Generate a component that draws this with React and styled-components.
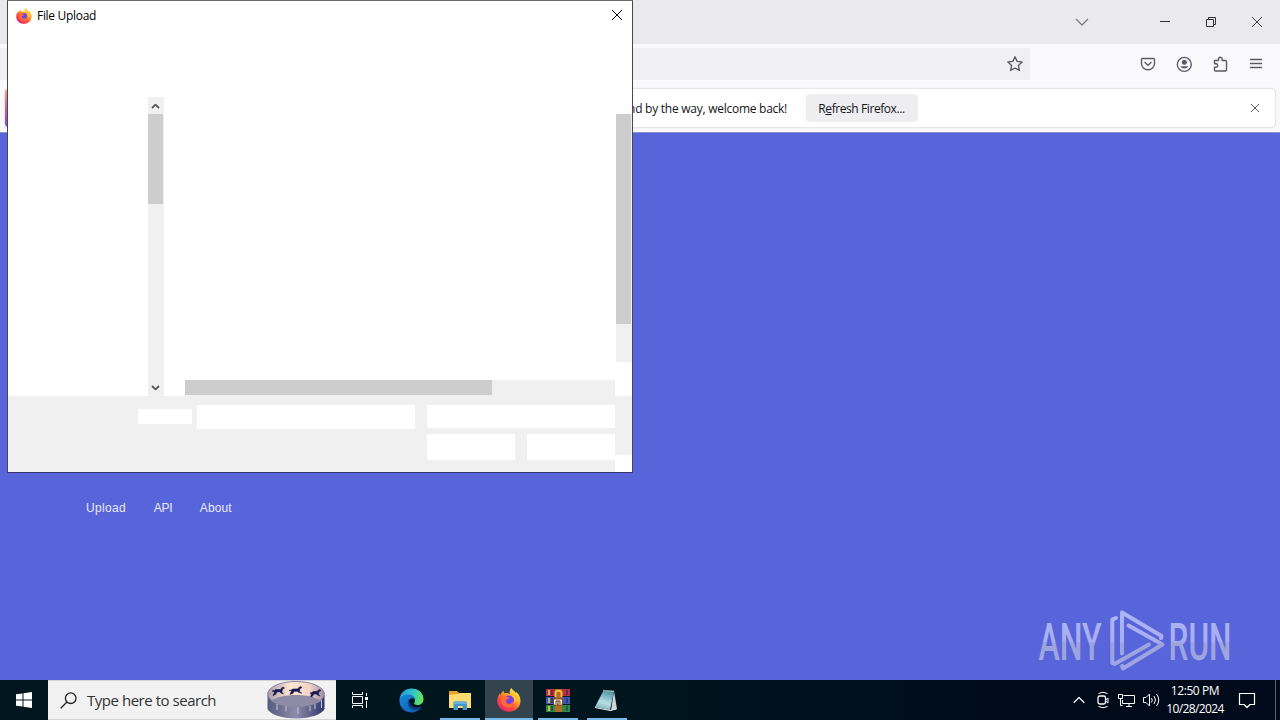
import React from "react";
import styled, { createGlobalStyle } from "styled-components";

const GlobalStyle = createGlobalStyle`
  * {
    box-sizing: border-box;
  }
  body {
    margin: 0;
    overflow: hidden;
  }
`;

const Screen = styled.div`
  position: relative;
  display: flex;
  flex-direction: column;
  width: 1280px;
  height: 720px;
  overflow: hidden;
  background: #f9f9fb;
  font-family: "Open Sans", "Noto Sans", sans-serif;
  svg {
    display: block;
    flex: none;
    overflow: visible;
  }
`;

const Label = styled.span`
  font-family: ${(p) => p.$font || '"Open Sans", sans-serif'};
  font-size: ${(p) => p.$size || 12}px;
  letter-spacing: ${(p) => p.$spacing || 0}px;
  color: ${(p) => p.$color || "#15141a"};
  line-height: 18px;
  white-space: pre;
  u {
    text-underline-offset: 1px;
  }
`;

/* browser window */

const TabStrip = styled.div`
  display: flex;
  justify-content: flex-end;
  align-items: center;
  height: 44px;
  padding-right: 17px;
  background: #eaeaee;
`;

const WindowButtons = styled.div`
  display: flex;
  gap: 34px;
  margin-left: 70px;
`;

const NavBar = styled.div`
  display: flex;
  align-items: center;
  justify-content: space-between;
  height: 40px;
  padding: 0 16px 0 0;
  background: #f9f9fb;
`;

const UrlBar = styled.div`
  display: flex;
  align-items: center;
  justify-content: flex-end;
  width: 1030px;
  height: 32px;
  padding-right: 7px;
  background: #f0f0f4;
`;

const NavIcons = styled.div`
  display: flex;
  gap: 20px;
`;

const NoticeRow = styled.div`
  height: 48px;
  padding: 5px 5px 0 5px;
  background: #f9f9fb;
`;

const Notice = styled.div`
  display: flex;
  align-items: center;
  height: 38px;
  border-radius: 4px;
  background: linear-gradient(#f5a878, #c9609b 50%, #8a4fc4) left / 4px 100% no-repeat #fff;
  box-shadow: 0 0 2px rgba(58, 57, 68, 0.35);
  padding-right: 12px;
`;

const NoticeText = styled.div`
  display: flex;
  justify-content: flex-end;
  width: 782px;
  padding-top: 2px;
`;

const RefreshButton = styled.button`
  width: 112px;
  height: 28px;
  margin: 0 auto 0 19px;
  padding: 2px 1px 0 0;
  border: 0;
  border-radius: 4px;
  background: #eeeef0;
`;

const Page = styled.main`
  display: flex;
  justify-content: space-between;
  height: 548px;
  border-top: 1px solid #8c93d0;
  background: #5865da;
`;

const PageLinks = styled.nav`
  display: flex;
  align-items: flex-start;
  gap: 27.6px;
  padding: 366px 0 0 86px;
`;

const Watermark = styled.div`
  align-self: flex-end;
  padding: 0 42px 7px 0;
`;

/* upload dialog, floats over the browser */

const Dialog = styled.section`
  position: absolute;
  left: 7px;
  top: 0;
  display: flex;
  flex-direction: column;
  width: 626px;
  height: 473px;
  border: 1px solid #47474f;
  border-top-color: #6a6a6e;
  border-bottom-color: #33366e;
  background: #fff;
`;

const DialogTitle = styled.header`
  display: flex;
  align-items: center;
  height: 30px;
  padding: 0 9px 0 8px;
  gap: 5px;
  svg:last-child {
    margin: -2px 0 0 auto;
  }
`;

const DialogBody = styled.div`
  display: flex;
  height: 365px;
`;

const TreeScroll = styled.div`
  display: flex;
  flex-direction: column;
  width: 16px;
  margin: 66px 0 0 140px;
  background: #f0f0f0;
`;

const ScrollArrow = styled.div`
  display: flex;
  align-items: center;
  justify-content: center;
  height: 17px;
  width: 15px;
  margin-top: ${(p) => (p.$down ? "auto" : 0)};
`;

const Thumb = styled.div`
  width: ${(p) => p.$w}px;
  height: ${(p) => p.$h}px;
  background: #cdcdcd;
`;

const Files = styled.div`
  display: flex;
  align-items: flex-end;
  flex: 1;
  padding: 0 1px 0 21px;
`;

const BottomScroll = styled.div`
  width: 430px;
  height: 16px;
  background: #f0f0f0;
`;

const SideScroll = styled.div`
  width: 16px;
  height: 248px;
  margin-top: 83px;
  background: #f0f0f0;
`;

const DialogFooter = styled.footer`
  display: flex;
  height: 76px;
`;

const Fields = styled.div`
  display: flex;
  align-items: flex-start;
  width: 607px;
  padding: 9px 0 0 130px;
  background: #f0f0f0;
`;

const Blank = styled.div`
  width: ${(p) => p.$w}px;
  height: ${(p) => p.$h}px;
  background: #fff;
`;

const FieldName = styled(Blank)`
  margin: 4px 5px 0 0;
`;

const FooterActions = styled.div`
  display: flex;
  flex-wrap: wrap;
  gap: 6px 12px;
  width: 188px;
  margin-left: 12px;
`;

const FooterEdge = styled.div`
  width: 17px;
  height: 59px;
  background: #f0f0f0;
`;

/* taskbar */

const Taskbar = styled.div`
  display: flex;
  height: 40px;
  background: linear-gradient(90deg, #00171f 0, #00151e 50%, #000b1a 80%, #000a1a);
`;

const StartButton = styled.div`
  display: flex;
  align-items: center;
  justify-content: center;
  width: 48px;
`;

const SearchBox = styled.div`
  display: flex;
  align-items: center;
  width: 288px;
  padding: 0 11px 0 12px;
  border: 1px solid #d4d4d4;
  border-width: 1px 0;
  background: #f2f2f2;
  span {
    margin-left: 10px;
  }
  svg:last-child {
    margin-left: auto;
  }
`;

const TaskView = styled.div`
  display: flex;
  align-items: center;
  justify-content: center;
  width: 51px;
  padding-right: 3px;
`;

const AppButton = styled.div`
  display: flex;
  align-items: center;
  justify-content: center;
  width: 48px;
  margin-right: 1px;
  background: ${(p) =>
    p.$running
      ? `linear-gradient(#76b9ed, #76b9ed) center bottom / ${p.$active ? 48 : 40}px 2px no-repeat`
      : "none"};
  background-color: ${(p) => (p.$active ? "#34444f" : "transparent")};
`;

const Tray = styled.div`
  display: flex;
  align-items: center;
  gap: 7px;
  margin-left: auto;
`;

const Clock = styled.div`
  display: flex;
  flex-direction: column;
  align-items: center;
  width: 60px;
  margin-right: 6px;
  margin-left: -2px;
`;

const ShowDesktop = styled.div`
  width: 5px;
  height: 40px;
  margin-left: 12px;
  border-left: 1px solid #59606b;
`;

const Line = ({ w, h, d, color = "#5b5b66", stroke = 1, children }) => (
  <svg
    width={w}
    height={h}
    viewBox={`0 0 ${w} ${h}`}
    fill="none"
    stroke={color}
    strokeWidth={stroke}
    strokeLinejoin="round"
  >
    {d && <path d={d} />}
    {children}
  </svg>
);

const Firefox = ({ size, id }) => (
  <svg width={size} height={size} viewBox="0 0 24 24">
    <defs>
      <linearGradient id={id} x1="0.85" y1="0.05" x2="0.2" y2="0.95">
        <stop offset="0" stopColor="#fff04a" />
        <stop offset="0.35" stopColor="#ffb02a" />
        <stop offset="0.65" stopColor="#ff5338" />
        <stop offset="1" stopColor="#e72470" />
      </linearGradient>
    </defs>
    <path
      fill={`url(#${id})`}
      d="M14.500 0c1 2.200 3.500 3.200 4.500 5.200.4-.4.3-1 .3-1.400 2.700 2.500 4.200 5.600 4.200 9C23.500 19.200 18.500 23.700 12 23.700 5.500 23.700.3 19.200.3 13c0-3.200 1-5.600 2.700-7.700l.3 1.900C4.200 5 5.300 3.500 6.700 2.700c-.2 1 .1 2 .8 2.500 2-.5 3.800 0 5.300 1C12.300 4 12.800 1.500 14.500 0z"
    />
    <circle cx="12" cy="12.600" r="5" fill="#7541df" />
    <path d="M4.500 9.500c2-1.700 5-1.500 8 .5-1 1.300-3 1.400-3.700 2-.5 2.300 1.200 4 3.300 4 2.300 0 3.600-1.400 3.900-3 .9 4-1.500 6.600-5 6.600-4.500 0-7.300-4.300-6.500-10.100z" fill="#ff6a36" />
    <path d="M13.500 5.500c3.300 2.500 4.800 5.500 3.600 10 2.700-2 2.900-6 1.400-8.500" fill="#ffbd2e" />
  </svg>
);

const Pool = () => (
  <svg width="58" height="38" viewBox="0 0 58 38">
    <defs>
      <linearGradient id="poolSide">
        <stop offset="0" stopColor="#555a80" />
        <stop offset="0.5" stopColor="#8f8ca9" />
        <stop offset="1" stopColor="#30366d" />
      </linearGradient>
      <linearGradient id="poolWall">
        <stop offset="0" stopColor="#a99bab" />
        <stop offset="0.4" stopColor="#ffe7d2" />
        <stop offset="0.75" stopColor="#f0d3c6" />
        <stop offset="1" stopColor="#9c8ca6" />
      </linearGradient>
    </defs>
    <path d="M.5 14v14c2 5 14 9.500 28.500 9.500S55.500 33 57.500 28V14z" fill="url(#poolSide)" />
    <ellipse cx="29" cy="13" rx="28.300" ry="12.500" fill="url(#poolWall)" stroke="#85859f" />
    <path d="M4 20c5-4 15-6 25-6s20 2 25 6c-6 4-15 5.500-25 5.500S10 24 4 20z" fill="#8d8ba6" />
    <path d="M10 23v6M19 25v5M31 26v7M43 25v5M48 23v5M54.500 19v8" stroke="#c9c7dc" fill="none" />
    <g fill="#17174e" stroke="#17174e" strokeWidth=".6">
      <path d="M5 10l2.500-.5 1-1h5L15.500 6l2 1-2 1-.7 3 1.700 2-2.500-1-1.200-1.200H10L8.500 13.500 6 14.500l1.700-3.500z" />
      <path d="M22 9.500l2.500-.5 1-1h5L33 5.500l2 1-2 1-.7 3 2.500 1.500-3-.5-1.500-1.200h-3l-1.800 2.500-2.500.5 1.700-3.500z" />
      <path d="M43 12l2-.5 1-1h4L52 8.500l2 1-2 1-.7 2.500 1.700 2-2.500-1-1.200-1H47l-1.800 2.500-1.700.3 1-3z" />
    </g>
  </svg>
);

const Edge = () => (
  <svg width="25" height="25" viewBox="0 0 25 25">
    <defs>
      <linearGradient id="edgeTop" x1="0" y1="0.3" x2="1" y2="0.5">
        <stop offset="0" stopColor="#249fe0" />
        <stop offset="0.55" stopColor="#32c5c8" />
        <stop offset="1" stopColor="#6be353" />
      </linearGradient>
      <linearGradient id="edgeLow" x1="0" y1="0" x2="1" y2="1">
        <stop offset="0" stopColor="#1688dc" />
        <stop offset="1" stopColor="#1158a8" />
      </linearGradient>
    </defs>
    <path d="M.5 12C1 5 6 .5 12.500.5 19.500.5 24.500 5 24.500 11c0 4-3 6-6 6s-4-1-3-2.500C17 11 14.500 7.500 10 7.500 5 7.500 1 10 .5 12z" fill="url(#edgeTop)" />
    <path d="M.5 12C1.200 8.500 5 6.500 9 6.500c4.500 0 7.500 2.500 7.300 5.500-1-2-4-2.500-5.800-.5C7 15.500 11 21 17 20.500c2.500-.2 4.500-1.400 5.500-2C20.500 22 17 24.500 12.500 24.500 5.500 24.500 0 19 .5 12z" fill="url(#edgeLow)" />
    <path d="M9.500 12c-2.500 5 1.500 10.500 7.500 10 2.500-.3 4.500-1.800 5.500-3.500-5 2.500-10 .5-11.500-3-.5-1.200-.8-2.500-.2-4z" fill="#123f86" />
  </svg>
);

const Explorer = () => (
  <svg width="22" height="20" viewBox="0 0 22 20">
    <path d="M0 1h8l2 2h11v4H0z" fill="#e8a624" />
    <path d="M0 5l9-1 2-1h11v15H0z" fill="#ffdc70" />
    <path d="M4.500 20v-7L6 11.500h10.500L18 13v7h-4.500v-4h-4.500v4z" fill="#4397ce" />
    <path d="M4.500 11.500H18v2.500H4.500z" fill="#64b3e3" />
  </svg>
);

const WinRar = () => (
  <svg width="24" height="23" viewBox="0 0 24 23">
    <rect y="0" width="24" height="7" fill="#b8324a" />
    <rect y="8" width="24" height="7" fill="#3f57b5" />
    <rect y="16" width="24" height="7" fill="#2c8a45" />
    <path d="M3 1v5M3 9v5M3 17v5" stroke="#e9cf5a" strokeWidth="1.500" />
    <path d="M6 1v5M21 1v5M6 9v5M21 9v5M6 17v5M21 17v5" stroke="#17203d" strokeOpacity=".45" strokeWidth="2" />
    <rect x="9" width="7" height="23" fill="#b56a2a" />
    <path d="M9.500 8V3.500C10 1 15 1 15.500 3.500V8" fill="none" stroke="#f2c230" strokeWidth="2" />
    <rect x="7.500" y="10" width="9" height="6" fill="#fff3d0" stroke="#7d4515" />
    <path d="M10 15v-3h4v3M12 12v4" stroke="#5d3524" fill="none" />
  </svg>
);

const Notepad = () => (
  <svg width="25" height="23" viewBox="0 0 25 23">
    <defs>
      <linearGradient id="pad" x1="0.600" y1="0" x2="0.300" y2="1">
        <stop offset="0" stopColor="#4f959e" />
        <stop offset="0.6" stopColor="#b8e0e4" />
        <stop offset="1" stopColor="#78a9b2" />
      </linearGradient>
    </defs>
    <path d="M19 2l3 18-6 1.500z" fill="#cfd3d4" />
    <path d="M8.500 1.500L19 2l-4 19-15-3z" fill="url(#pad)" />
    <path d="M8.500 1.500l10.500.8" stroke="#dfeeee" strokeWidth="1.500" strokeDasharray="1 1" />
    <path d="M0 18.500l15 3 6.500-1.500" stroke="#e9f0f0" fill="none" />
  </svg>
);

const AnyRun = () => (
  <svg width="200" height="64" viewBox="1038 609 200 64">
    <defs>
      <linearGradient id="mark" x1="0" y1="610" x2="0" y2="671" gradientUnits="userSpaceOnUse">
        <stop offset="0" stopColor="#aeb5f3" />
        <stop offset="0.52" stopColor="#a8aef0" />
        <stop offset="0.54" stopColor="#9da3dc" />
        <stop offset="1" stopColor="#a0a6e4" />
      </linearGradient>
    </defs>
    <g fill="url(#mark)" fontFamily="Roboto, sans-serif" fontSize="52" fontWeight="500">
      <text x="1038.500" y="659.500" textLength="63" lengthAdjust="spacingAndGlyphs">ANY</text>
      <text x="1168.500" y="659.500" textLength="63" lengthAdjust="spacingAndGlyphs">RUN</text>
    </g>
    <g fill="none" stroke="url(#mark)" strokeWidth="4" strokeLinejoin="round" strokeLinecap="round">
      <path d="M1116 618l-3.700 1.500v43.500l2.200 1L1149 644.500" />
      <path d="M1122 653.500v-41L1161.500 636l-.5 2" />
      <path d="M1128.500 625.500L1162.500 644.500 1123 668.500l-.8-2.500" />
    </g>
  </svg>
);

const App = () => (
  <Screen>
    <GlobalStyle />
    <TabStrip>
      <Line w={14} h={8} d="M1 1l6 6 6-6" color="#77777d" stroke={1.2} />
      <WindowButtons>
        <Line w={12} h={12} d="M1 5.500h10" color="#333" />
        <Line w={12} h={12} d="M1.500 3.500h7v7h-7zM3.500 3.500v-2h7v7h-2" color="#333" />
        <Line w={12} h={12} d="M1 1l10 10M11 1L1 11" color="#444" />
      </WindowButtons>
    </TabStrip>
    <NavBar>
      <UrlBar>
        <Line w={16} h={16} stroke={1.4} d="M8 .8l2.100 4.600 5 .6-3.700 3.400 1 5L8 12l-4.400 2.400 1-5L.9 6l5-.6z" />
      </UrlBar>
      <NavIcons>
        <Line w={16} h={16} stroke={1.4} d="M2.500 2.500h11q1 0 1 1V7.500a6.500 6.200 0 0 1-13 0v-4q0-1 1-1zM4.500 6L8 9.200 11.500 6" />
        <Line w={16} h={16} stroke={1.4}>
          <circle cx="8.300" cy="8.400" r="7" />
          <circle cx="8.300" cy="6.300" r="2.500" fill="#5b5b66" stroke="none" />
          <path d="M4.100 10.300h8.400a5 5 0 0 1-8.400 0z" fill="#5b5b66" stroke="none" />
        </Line>
        <Line w={16} h={16} stroke={1.4} d="M2.500 4.500h4V3a1.800 1.800 0 0 1 3.600 0v1.500h3.400q1 0 1 1V14q0 1-1 1h-10q-1 0-1-1v-2.800h1.500a1.700 1.700 0 0 0 0-3.400H2.500z" />
        <Line w={16} h={16} stroke={1.3} d="M2 3.500h12M2 7.500h12M2 11.500h12" />
      </NavIcons>
    </NavBar>
    <NoticeRow>
      <Notice>
        <NoticeText>
          <Label $spacing={-0.26}>And by the way, welcome back!</Label>
        </NoticeText>
        <RefreshButton>
          <Label $spacing={-0.42}>
            R<u>e</u>fresh Firefox...
          </Label>
        </RefreshButton>
        <Line w={16} h={16} d="M4 4l8 8M12 4l-8 8" />
      </Notice>
    </NoticeRow>
    <Page>
      <PageLinks>
        <Label $font='"Liberation Sans", sans-serif' $color="#e6e8fb" $spacing={0.35}>Upload</Label>
        <Label $font='"Liberation Sans", sans-serif' $color="#e6e8fb" $spacing={-0.3}>API</Label>
        <Label $font='"Liberation Sans", sans-serif' $color="#e6e8fb" $spacing={0.1}>About</Label>
      </PageLinks>
      <Watermark>
        <AnyRun />
      </Watermark>
    </Page>

    <Taskbar>
      <StartButton>
        <svg width="16" height="16" viewBox="0 0 16 16" fill="#fff">
          <path d="M0 2.300l6.500-.9v6.100H0zM7.500 1.200L16 0v7.500H7.500zM0 8.500h6.500v6.100L0 13.700zM7.500 8.500H16V16l-8.500-1.200z" />
        </svg>
      </StartButton>
      <SearchBox>
        <Line w={17} h={17} color="#222" stroke={1.3} d="M7 10L.7 16.300">
          <circle cx="10.700" cy="6.200" r="5.300" />
        </Line>
        <Label $size={15} $spacing={-0.47} $color="#333">Type here to search</Label>
        <Pool />
      </SearchBox>
      <TaskView>
        <Line w={16} h={16} color="#fff" d="M.5 0v2.500h10V0M.5 4.500h10v7H.500zM.5 16v-2.500h10V16M14.500 1v3M14.500 9v7">
          <path d="M13 5h3v3h-3z" fill="#fff" stroke="none" />
        </Line>
      </TaskView>
      <AppButton>
        <Edge />
      </AppButton>
      <AppButton $running>
        <Explorer />
      </AppButton>
      <AppButton $running $active>
        <Firefox size={24} id="ffTask" />
      </AppButton>
      <AppButton $running>
        <WinRar />
      </AppButton>
      <AppButton $running>
        <Notepad />
      </AppButton>
      <Tray>
        <Line w={13} h={8} color="#fff" stroke={1.2} d="M.7 6.700L6 1.500l5.300 5.200" />
        <Line w={18} h={18} color="#fff" d="M5.500 2.500q4.500-2.500 9 0M5.500 15.500q4.500 2.500 9 0">
          <rect x="5" y="5" width="7.500" height="8" rx="1.800" stroke="#fff" strokeWidth="1.300" />
          <path d="M12.500 9l2.500-2v5l-2.500-2" />
        </Line>
        <Line w={17} h={16} color="#fff" d="M5.500 3.500h11v8h-12V8M8 14.500h6M11 11.500v3M.500 2.500h4v4h-4zM2.500 6.500v7h2" />
        <Line w={18} h={16} color="#fff" d="M1.500 5.500h2.500L7.500 2v12L4 10.500H1.500zM9.500 6q1.500 2 0 4.500M12 4q3 4 0 8M14.500 2q4.500 6 0 12" />
        <Clock>
          <Label $color="#fff" $spacing={-0.4}>12:50 PM</Label>
          <Label $color="#fff" $spacing={-0.6}>10/28/2024</Label>
        </Clock>
        <Line w={18} h={18} color="#fff" stroke={1.2} d="M1.500 2.500h15v11H12l-3 3-3-3H1.500z" />
        <ShowDesktop />
      </Tray>
    </Taskbar>

    <Dialog>
      <DialogTitle>
        <Firefox size={16} id="ffTitle" />
        <Label $color="#000" $spacing={-0.3}>File Upload</Label>
        <Line w={12} h={12} color="#000" d="M1 1l10 10M11 1L1 11" />
      </DialogTitle>
      <DialogBody>
        <TreeScroll>
          <ScrollArrow>
            <Line w={9} h={6} color="#555" stroke={1.8} d="M1 5l3.500-3.300L8 5" />
          </ScrollArrow>
          <Thumb $w={15} $h={90} />
          <ScrollArrow $down>
            <Line w={9} h={6} color="#555" stroke={1.8} d="M1 1l3.500 3.300L8 1" />
          </ScrollArrow>
        </TreeScroll>
        <Files>
          <BottomScroll>
            <Thumb $w={307} $h={15} />
          </BottomScroll>
        </Files>
        <SideScroll>
          <Thumb $w={15} $h={210} />
        </SideScroll>
      </DialogBody>
      <DialogFooter>
        <Fields>
          <FieldName $w={54} $h={15} />
          <Blank $w={218} $h={24} />
          <FooterActions>
            <Blank $w={188} $h={23} />
            <Blank $w={88} $h={26} />
            <Blank $w={88} $h={26} />
          </FooterActions>
        </Fields>
        <FooterEdge />
      </DialogFooter>
    </Dialog>
  </Screen>
);

export default App;
